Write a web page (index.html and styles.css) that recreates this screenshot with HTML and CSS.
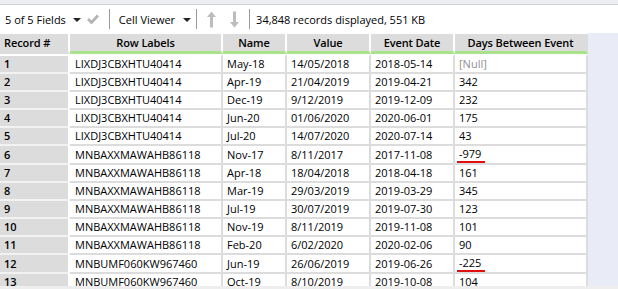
FILE: index.html
```html
<!DOCTYPE html>
<html>
<head>
<meta charset="utf-8">
<link rel="stylesheet" href="styles.css">
</head>
<body>
<div class="topstrip"></div>
<div class="toolbar">
  <span class="tb-text">5 of 5 Fields</span>
  <span class="caret caret-1"></span>
  <svg class="check" width="12" height="10" viewBox="0 0 12 10"><path d="M1 5 L4.5 8.5 L11 1.5" fill="none" stroke="#b4b4b4" stroke-width="2.8"/></svg>
  <span class="sep sep-1"></span>
  <span class="tb-text">Cell Viewer</span>
  <span class="caret caret-2"></span>
  <span class="sep sep-2"></span>
  <svg class="arrow arrow-up" width="9" height="17" viewBox="0 0 9 17"><path d="M4.5 0.5 L9 6 L6 6 L6 16.5 L3 16.5 L3 6 L0 6 Z" fill="#bdbdbd"/></svg>
  <svg class="arrow arrow-down" width="9" height="17" viewBox="0 0 9 17"><path d="M4.5 16.5 L9 11 L6 11 L6 0.5 L3 0.5 L3 11 L0 11 Z" fill="#bdbdbd"/></svg>
  <span class="sep sep-3"></span>
  <span class="tb-text">34,848 records displayed, 551 KB</span>
</div>
<div class="grid-area">
  <div class="table-wrap">
    <table class="grid">
      <colgroup>
        <col class="c-rec"><col class="c-lab"><col class="c-name"><col class="c-val"><col class="c-date"><col class="c-days">
      </colgroup>
      <thead>
        <tr>
          <th class="rec-h">Record #</th>
          <th>Row Labels</th>
          <th>Name</th>
          <th>Value</th>
          <th>Event Date</th>
          <th>Days Between Event</th>
        </tr>
      </thead>
      <tbody>
        <tr><td class="rec">1</td><td>LIXDJ3CBXHTU40414</td><td>May-18</td><td>14/05/2018</td><td>2018-05-14</td><td class="null">[Null]</td></tr>
        <tr><td class="rec">2</td><td>LIXDJ3CBXHTU40414</td><td>Apr-19</td><td>21/04/2019</td><td>2019-04-21</td><td>342</td></tr>
        <tr><td class="rec">3</td><td>LIXDJ3CBXHTU40414</td><td>Dec-19</td><td>9/12/2019</td><td>2019-12-09</td><td>232</td></tr>
        <tr><td class="rec">4</td><td>LIXDJ3CBXHTU40414</td><td>Jun-20</td><td>01/06/2020</td><td>2020-06-01</td><td>175</td></tr>
        <tr><td class="rec">5</td><td>LIXDJ3CBXHTU40414</td><td>Jul-20</td><td>14/07/2020</td><td>2020-07-14</td><td>43</td></tr>
        <tr><td class="rec">6</td><td>MNBAXXMAWAHB86118</td><td>Nov-17</td><td>8/11/2017</td><td>2017-11-08</td><td><span class="neg">-979</span></td></tr>
        <tr><td class="rec">7</td><td>MNBAXXMAWAHB86118</td><td>Apr-18</td><td>18/04/2018</td><td>2018-04-18</td><td>161</td></tr>
        <tr><td class="rec">8</td><td>MNBAXXMAWAHB86118</td><td>Mar-19</td><td>29/03/2019</td><td>2019-03-29</td><td>345</td></tr>
        <tr><td class="rec">9</td><td>MNBAXXMAWAHB86118</td><td>Jul-19</td><td>30/07/2019</td><td>2019-07-30</td><td>123</td></tr>
        <tr><td class="rec">10</td><td>MNBAXXMAWAHB86118</td><td>Nov-19</td><td>8/11/2019</td><td>2019-11-08</td><td>101</td></tr>
        <tr><td class="rec">11</td><td>MNBAXXMAWAHB86118</td><td>Feb-20</td><td>6/02/2020</td><td>2020-02-06</td><td>90</td></tr>
        <tr><td class="rec">12</td><td>MNBUMF060KW967460</td><td>Jun-19</td><td>26/06/2019</td><td>2019-06-26</td><td><span class="neg">-225</span></td></tr>
        <tr><td class="rec">13</td><td>MNBUMF060KW967460</td><td>Oct-19</td><td>8/10/2019</td><td>2019-10-08</td><td>104</td></tr>
      </tbody>
    </table>
  </div>
  <div class="filler"></div>
</div>
<div class="bottomstrip"></div>
</body>
</html>
```
FILE: styles.css
```css
html, body {
  margin: 0;
  padding: 0;
  background: #ffffff;
  width: 618px;
  height: 289px;
  overflow: hidden;
  font-family: "Open Sans", "Noto Sans", sans-serif;
  font-size: 11px;
  color: #000;
}

.topstrip {
  height: 4px;
  background: #eceef2;
  border-bottom: 1px solid #cfd1d8;
}

.toolbar {
  height: 28px;
  display: flex;
  align-items: center;
  padding-left: 5px;
  background: #ffffff;
  box-sizing: border-box;
}

.tb-text {
  font-size: 11px;
  white-space: nowrap;
}

.caret {
  width: 0;
  height: 0;
  border-left: 4px solid transparent;
  border-right: 4px solid transparent;
  border-top: 4px solid #222;
  margin-top: 1px;
}

.caret-1 { margin-left: 7px; }
.caret-2 { margin-left: 8px; }

.check {
  margin-left: 6px;
}

.sep {
  width: 1px;
  height: 20px;
  background: #9a9a9a;
}

.sep-1 { margin: 0 9px 0 10px; }
.sep-2 { margin: 0 10px 0 5px; }
.sep-3 { margin: 0 6px 0 10px; }

.arrow-down {
  margin-left: 14px;
}

.grid-area {
  display: flex;
  height: 253px;
  overflow: hidden;
}

.table-wrap {
  background: #ffffff;
  padding-top: 1px;
}

.filler {
  flex: 1;
  background: #e9ecf6;
}

.grid {
  border-collapse: separate;
  border-spacing: 0;
  table-layout: fixed;
  width: 588px;
}

.c-rec { width: 70px; }
.c-lab { width: 153px; }
.c-name { width: 64px; }
.c-val { width: 84px; }
.c-date { width: 84px; }
.c-days { width: 133px; }

.grid th {
  height: 17px;
  padding: 0;
  background: #dcdcdc;
  border-right: 2px solid #ffffff;
  border-bottom: 3px solid #a8e38b;
  font-weight: 600;
  letter-spacing: -0.1px;
  text-align: center;
  white-space: nowrap;
  line-height: 17px;
  box-sizing: content-box;
}

.grid th:last-child {
  border-right: 2px solid #dcdcdc;
}

.grid th.rec-h {
  text-align: left;
  padding-left: 4px;
  border-bottom: 3px solid #dcdcdc;
}

.grid td {
  height: 16px;
  padding: 0 0 0 4px;
  line-height: 16px;
  white-space: nowrap;
  overflow: hidden;
  border-right: 2px solid #dcdcdc;
  border-top: 2px solid #dcdcdc;
  background: #ffffff;
}

.grid tbody tr:first-child td {
  border-top: 2px solid #ffffff;
}

.grid td.rec {
  background: #dcdcdc;
  font-weight: 600;
  border-top-color: #f2f2f2;
  border-right-color: #ffffff;
}

.grid tbody tr td:nth-child(2) {
  padding-left: 5px;
}

.null {
  color: #909090;
}

.neg {
  display: inline-block;
  line-height: 14px;
  border-bottom: 2px solid #e01010;
  padding-right: 4px;
  margin-left: -2px;
  padding-left: 2px;
}

.bottomstrip {
  height: 3px;
  background: #eeeeee;
}
```
